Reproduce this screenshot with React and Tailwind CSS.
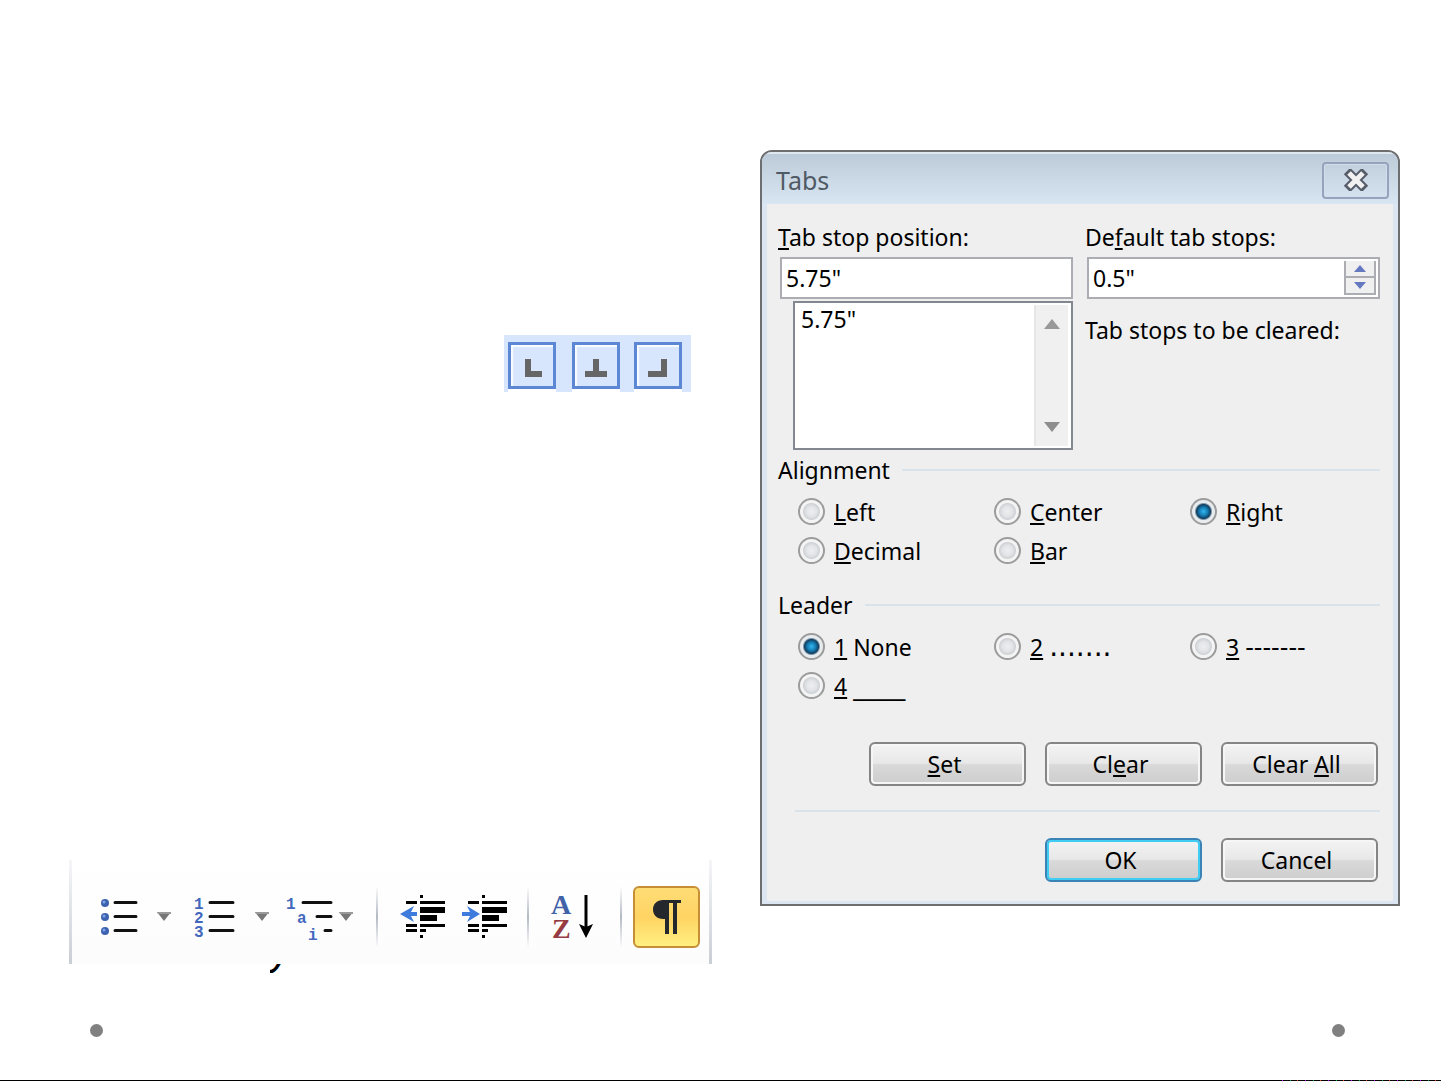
import { useState } from "react";

const alignments = [
    { id: "left", key: "L", rest: "eft" },
    { id: "center", key: "C", rest: "enter" },
    { id: "right", key: "R", rest: "ight" },
    { id: "decimal", key: "D", rest: "ecimal" },
    { id: "bar", key: "B", rest: "ar" },
];

const leaders = [
    { id: "none", key: "1", rest: " None" },
    { id: "dots", key: "2", rest: " ", sample: ".......", font: "text-[28px]" },
    { id: "dashes", key: "3", rest: " ", sample: "-------", font: "text-2xl" },
    { id: "line", key: "4", rest: " ", sample: "____", font: "text-[26px]" },
];

const tabMarks = [
    { name: "Left tab", d: "M20 17v15h14", gap: "mr-4" },
    { name: "Center tab", d: "M24 17v15M13 32h22", gap: "mr-3.5" },
    { name: "Right tab", d: "M30 17v15h-16", gap: "" },
];

function TabMarks() {
    return (
        <div className="flex self-end mt-[185px] mr-[21px] pt-[7px] pl-1 pr-[9px] bg-[#d7e6fd]">
            {tabMarks.map((mark) => (
                <div key={mark.name} className={`pb-[3px] bg-[linear-gradient(to_top,#fff_3px,transparent_3px)] ${mark.gap}`}>
                    <button aria-label={mark.name} className="block w-12 h-[47px] border-[3px] border-[#5c87d4] bg-[#d7e6fd] shadow-[inset_2px_2px_1px_#f8fbff]">
                        <svg viewBox="3 3 42 41" className="w-full h-full" fill="none" stroke="#666" strokeWidth="6">
                            <path d={mark.d} strokeLinejoin="miter" />
                        </svg>
                    </button>
                </div>
            ))}
        </div>
    );
}

function DropArrow({ label }) {
    return (
        <button aria-label={label} className="w-4 h-12 flex items-center justify-center">
            <svg width="16" height="10" viewBox="0 0 16 10">
                <path d="M1 0h14L8 9z" fill="#777" />
                <path d="M1 0h14v2H2z" fill="#9a9a9a" />
            </svg>
        </button>
    );
}

function Separator({ className }) {
    return <div className={`w-0.5 h-[62px] bg-linear-to-b from-transparent via-[#b4bac3] to-transparent ${className}`} />;
}

function IndentIcon({ flip }) {
    return (
        <svg width="48" height="50" viewBox="0 0 48 50">
            <path d="M20 3h3v3h-3zM6 9h11v3H6zM20 9h25v3H20zM20 15h25v6H20zM20 23h17v6H20zM6 32h11v3H6zM20 32h25v3H20zM6 37h11v3H6zM20 37h6v3h-6zM20 43h3v3h-3z" fill="#000" />
            {flip
                ? <path d="M18 22L5 14l3 6H0v4h8l-3 6z" fill="#3f7bdc" />
                : <path d="M0 22l14-8-3 6h6v4h-6l3 6z" fill="#3f7bdc" />}
        </svg>
    );
}

function ParagraphToolbar() {
    return (
        <div className="mt-[468px] h-[104px] pt-2.5 flex items-center border-x-[3px] border-x-[#dde0e5] bg-linear-to-b from-white to-[#fcfcfc] [border-image:linear-gradient(to_bottom,#f6f6f8,#c9cdd4)_1]">
            <button aria-label="Bullets" className="ml-7">
                <svg width="40" height="50" viewBox="0 0 40 50">
                    <g fill="#3d62b0">
                        <circle cx="5" cy="11" r="4" />
                        <circle cx="5" cy="25" r="4" />
                        <circle cx="5" cy="39" r="4" />
                    </g>
                    <g fill="#7da3e6">
                        <circle cx="4" cy="10" r="1.5" />
                        <circle cx="4" cy="24" r="1.5" />
                        <circle cx="4" cy="38" r="1.5" />
                    </g>
                    <path d="M15 10.5h21M15 24.5h21M15 38.5h21" stroke="#111" strokeWidth="3" strokeLinecap="round" />
                </svg>
            </button>
            <div className="ml-4"><DropArrow label="Bullet options" /></div>
            <button aria-label="Numbering" className="ml-[22px]">
                <svg width="46" height="50" viewBox="0 0 46 50" fontFamily="Liberation Mono, monospace" fontWeight="700" fontSize="16" fill="#4468bd">
                    <text x="0" y="17">1</text>
                    <text x="0" y="31">2</text>
                    <text x="0" y="45">3</text>
                    <path d="M16 10.5h23M16 24.5h23M16 38.5h23" stroke="#111" strokeWidth="3" strokeLinecap="round" />
                </svg>
            </button>
            <div className="ml-3.5"><DropArrow label="Numbering options" /></div>
            <button aria-label="Multilevel list" className="ml-4">
                <svg width="52" height="50" viewBox="0 0 52 50" overflow="visible" fontFamily="Liberation Mono, monospace" fontWeight="700" fontSize="16" fill="#4468bd">
                    <text x="0" y="17">1</text>
                    <text x="11" y="31">a</text>
                    <text x="22" y="48">i</text>
                    <path d="M17 10.5h28M31 24.5h14M39 38.5h6" stroke="#111" strokeWidth="3" strokeLinecap="round" />
                </svg>
            </button>
            <div><DropArrow label="Multilevel options" /></div>
            <Separator className="ml-[22px]" />
            <button aria-label="Decrease indent" className="ml-[22px]"><IndentIcon /></button>
            <button aria-label="Increase indent" className="ml-3.5"><IndentIcon flip /></button>
            <Separator className="ml-[17px]" />
            <button aria-label="Sort" className="ml-[22px]">
                <svg width="46" height="50" viewBox="0 0 46 50" overflow="visible" fontFamily="Liberation Serif, serif" fontWeight="700" fontSize="28">
                    <text x="0" y="22" fill="#4062a8">A</text>
                    <text x="1" y="46" fill="#963b42">Z</text>
                    <path d="M35 3v32" stroke="#000" strokeWidth="3" />
                    <path d="M28 32l7 3 7-3-7 14z" fill="#000" />
                </svg>
            </button>
            <Separator className="ml-[23px]" />
            <button aria-label="Show paragraph marks" className="ml-[11px] w-[67px] h-[62px] flex items-center justify-center rounded-md border-2 border-[#c68f35] bg-linear-to-b from-[#fedd75] via-[#ffd363] to-[#fff080]">
                <svg width="30" height="36" viewBox="0 0 30 36">
                    <path d="M11 1h18v3h-4v31h-4V4h-4v31h-4V20h-2C5 20 1 16 1 10.500S5 1 11 1z" fill="#24282c" />
                </svg>
            </button>
        </div>
    );
}

function RadioGroup({ title, name, options, initial }) {
    const [value, setValue] = useState(initial);

    return (
        <div role="radiogroup" aria-label={title}>
            <div className="flex items-center gap-3 h-[30px]">
                <span>{title}</span>
                <span className="flex-1 h-0.5 bg-[#dbe3ea]" />
            </div>
            <div className="mt-[7px] ml-5 -mr-1.5 grid grid-cols-3">
                {options.map((option) => (
                    <label key={option.id} className="flex items-center gap-[9px] h-[39px] whitespace-pre">
                        <input
                            type="radio"
                            name={name}
                            checked={value === option.id}
                            onChange={() => setValue(option.id)}
                            className="appearance-none shrink-0 w-[27px] h-[27px] rounded-full border-2 border-[#9c9c9c] bg-[radial-gradient(circle_at_50%_50%,#eceef0_0,#e2e4e7_5px,#cfd2d6_8px,#f4f4f4_9px)] checked:bg-[radial-gradient(circle_at_50%_50%,#35b5ee_0,#1580b8_4px,#123e60_7px,#e8ecef_9px)]"
                        />
                        <span>
                            <u>{option.key}</u>{option.rest}
                            {option.sample && <span className={`leading-none font-['DejaVu_Sans',sans-serif] ${option.font}`}>{option.sample}</span>}
                        </span>
                    </label>
                ))}
            </div>
        </div>
    );
}

function DialogButton({ primary, children }) {
    return (
        <button
            className={`w-[157px] h-11 pr-1.5 rounded-md border-2 bg-[linear-gradient(to_bottom,#f3f3f3,#e8e8e8_48%,#d9d9d9_52%,#cdcdcd)] ${primary ? "border-[#3b83b5] shadow-[inset_0_0_0_2px_#40cdf4]" : "border-[#858585] shadow-[inset_0_0_0_2px_#f6f6f6]"}`}
        >
            {children}
        </button>
    );
}

function TabsDialog() {
    const [position, setPosition] = useState('5.75"');
    const [defaultStop, setDefaultStop] = useState('0.5"');

    return (
        <div role="dialog" aria-labelledby="tabs-title" className="self-start rounded-t-xl border-2 border-[#6c6e70] bg-[#dbe6f2] px-[5px] pb-[3px] overflow-hidden text-black text-[23px] leading-[30px] font-['Noto_Sans',sans-serif]">
            {/* Title bar */}
            <div className="-mx-[5px] h-[52px] pl-3.5 pr-[9px] flex items-center justify-between bg-linear-to-b from-[#bccad8] to-[#d8e5f2] shadow-[inset_0_2px_0_#dfe7ef]">
                <h1 id="tabs-title" className="text-[25px] text-[#505a64] pt-1">Tabs</h1>
                <button aria-label="Close" className="mt-1 w-[67px] h-[37px] flex items-center justify-center rounded border-2 border-[#96a3bf] shadow-[inset_0_0_0_1px_#d3deea]">
                    <svg width="26" height="22" viewBox="0 0 26 22" strokeLinecap="butt">
                        <path d="M4 2l18 18M22 2L4 20" stroke="#565d69" strokeWidth="9" />
                        <path d="M6 4l14 14M20 4L6 18" stroke="#f1f1f1" strokeWidth="5" />
                    </svg>
                </button>
            </div>

            <div className="bg-[#efefef] pt-[18px] pl-[11px] pr-[13px] pb-[19px]">
                <div className="grid grid-cols-2 gap-3">
                    <div>
                        <label htmlFor="position" className="block"><u>T</u>ab stop position:</label>
                        <div className="mt-[5px] ml-0.5 h-[42px] flex border-2 border-[#abadb3] bg-white">
                            <input
                                id="position"
                                value={position}
                                onChange={(e) => setPosition(e.target.value)}
                                className="flex-1 min-w-0 px-1 outline-none"
                            />
                        </div>
                        <div className="mt-0.5 ml-[15px] h-[149px] flex border-2 border-[#828790] bg-white">
                            <select size="4" aria-label="Tab stops" className="appearance-none flex-1 min-w-0 overflow-hidden outline-none bg-white">
                                <option className="px-1.5 py-0 leading-[30px] min-h-0">5.75"</option>
                            </select>
                            <div className="w-[34px] my-0.5 mr-[3px] flex flex-col justify-between items-center py-3.5 border-l-2 border-[#e6e6e6] bg-[#f0f0f0]">
                                <button aria-label="Scroll up">
                                    <svg width="16" height="10" viewBox="0 0 16 10" className="block"><path d="M8 0l8 10H0z" fill="#999" /></svg>
                                </button>
                                <button aria-label="Scroll down">
                                    <svg width="16" height="10" viewBox="0 0 16 10" className="block"><path d="M0 0h16L8 10z" fill="#8e8e8e" /></svg>
                                </button>
                            </div>
                        </div>
                    </div>
                    <div>
                        <label htmlFor="default-stop" className="block">De<u>f</u>ault tab stops:</label>
                        <div className="mt-[5px] ml-0.5 h-[42px] flex border-2 border-[#abadb3] bg-white">
                            <input
                                id="default-stop"
                                value={defaultStop}
                                onChange={(e) => setDefaultStop(e.target.value)}
                                className="flex-1 min-w-0 px-1 outline-none"
                            />
                            <div className="w-8 my-0.5 mr-0.5 flex flex-col border-2 border-t-0 border-[#abadb3] bg-[#f0f0f0]">
                                <button aria-label="Increase" className="flex-1 flex items-center justify-center border-b-2 border-[#abadb3]">
                                    <svg width="12" height="7" viewBox="0 0 12 7"><path d="M6 0l6 7H0z" fill="#6479c0" /></svg>
                                </button>
                                <button aria-label="Decrease" className="flex-1 flex items-center justify-center">
                                    <svg width="12" height="7" viewBox="0 0 12 7"><path d="M0 0h12L6 7z" fill="#6479c0" /></svg>
                                </button>
                            </div>
                        </div>
                        <p className="mt-4">Tab stops to be cleared:</p>
                    </div>
                </div>

                <div className="mt-[5px]">
                    <RadioGroup title="Alignment" name="alignment" options={alignments} initial="right" />
                </div>
                <div className="mt-5">
                    <RadioGroup title="Leader" name="leader" options={leaders} initial="none" />
                </div>

                {/* Actions */}
                <div className="mt-[37px] mr-0.5 flex justify-end gap-[19px]">
                    <DialogButton><u>S</u>et</DialogButton>
                    <DialogButton>Cl<u>e</u>ar</DialogButton>
                    <DialogButton>Clear <u>A</u>ll</DialogButton>
                </div>
                <div className="mt-6 ml-[17px] h-0.5 bg-[#dbe3ea]" />
                <div className="mt-[26px] mr-0.5 flex justify-end gap-[19px]">
                    <DialogButton primary>OK</DialogButton>
                    <DialogButton>Cancel</DialogButton>
                </div>
            </div>
        </div>
    );
}

export default function App() {
    return (
        <main className="min-h-screen flex flex-col bg-white">
            <div className="grid grid-cols-[643fr_640fr] gap-12 pt-[150px] pl-[69px] pr-[41px]">
                <div className="flex flex-col min-w-0">
                    <TabMarks />
                    <ParagraphToolbar />
                    <div className="ml-[201px] h-2.5 flex items-end overflow-hidden text-[44px] leading-[50px] italic text-black font-['Liberation_Sans',sans-serif]">y</div>
                </div>
                <TabsDialog />
            </div>
            <div className="mt-[50px] pl-[90px] pr-24 flex justify-between">
                <span className="w-[13px] h-[13px] rounded-full bg-[#808080]" />
                <span className="w-[13px] h-[13px] rounded-full bg-[#808080]" />
            </div>
            <div className="mt-auto h-px flex bg-black">
                <div className="ml-auto w-[166px] bg-[repeating-linear-gradient(to_right,#000_0_7px,#c0f_7px_8px,#000_8px_15px,#0a4_15px_16px,#000_16px_22px,#e40_22px_23px)]" />
            </div>
        </main>
    );
}
